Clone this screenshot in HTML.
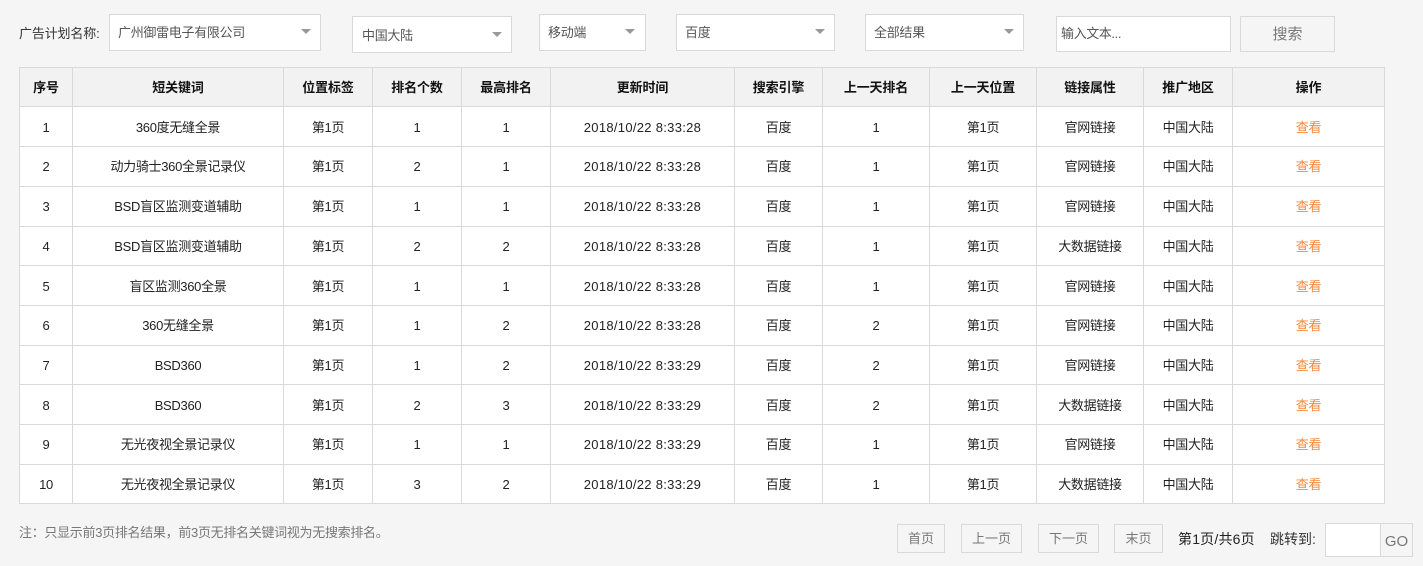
<!DOCTYPE html>
<html lang="zh-CN"><head><meta charset="utf-8"><title>排名</title>
<style>
*{box-sizing:border-box}
html,body{margin:0;padding:0;width:1423px;height:566px;overflow:hidden;background:#f5f5f5;font-family:"Liberation Sans","Noto Sans CJK SC",sans-serif;font-size:13px;color:#222}
.a{position:absolute;white-space:nowrap}
.box{position:absolute;background:#fff;border:1px solid #d9d9d9;color:#555;font-size:13px;white-space:nowrap;letter-spacing:-.3px}
.box i{position:absolute;width:0;height:0;border-left:5.5px solid transparent;border-right:5.5px solid transparent;border-top:5.5px solid #999;top:14px}
.btn{position:absolute;border:1px solid #d9d9d9;background:#f5f5f5;color:#777;text-align:center;white-space:nowrap}
table{position:absolute;left:19px;top:67px;border-collapse:collapse;table-layout:fixed;width:1365px;background:#fff;color:#222}
td,th{border:1px solid #d9d9d9;text-align:center;vertical-align:top;padding:11px 0 0;line-height:18px;font-size:13px;font-weight:400;white-space:nowrap;overflow:hidden;letter-spacing:-.3px}
th{background:#f2f2f2;color:#111;font-weight:700;letter-spacing:-.15px}
tr.o td{padding-top:12px}
td.d{letter-spacing:.3px}
.v{color:#f58a3c}
</style></head><body>
<div class="a" style="left:19px;top:25px;line-height:18px;color:#333;letter-spacing:-.15px">广告计划名称:</div>
<div class="box" style="left:109px;top:14px;width:212px;height:37px;line-height:35px;padding-left:8px">广州御雷电子有限公司<i style="left:191px"></i></div>
<div class="box" style="left:352px;top:16px;width:160px;height:37px;line-height:37px;padding-left:9px">中国大陆<i style="left:139px;top:15px"></i></div>
<div class="box" style="left:539px;top:14px;width:107px;height:37px;line-height:35px;padding-left:8px">移动端<i style="left:85px"></i></div>
<div class="box" style="left:676px;top:14px;width:159px;height:37px;line-height:35px;padding-left:8px">百度<i style="left:138px"></i></div>
<div class="box" style="left:865px;top:14px;width:159px;height:37px;line-height:35px;padding-left:8px">全部结果<i style="left:138px"></i></div>
<div class="box" style="left:1056px;top:16px;width:175px;height:36px;line-height:33px;padding-left:4px;letter-spacing:-.4px">输入文本...</div>
<div class="btn" style="left:1240px;top:16px;width:95px;height:36px;line-height:35px;font-size:15px">搜索</div>
<table>
<colgroup><col style="width:53px"><col style="width:211px"><col style="width:89px"><col style="width:89px"><col style="width:89px"><col style="width:184px"><col style="width:88px"><col style="width:107px"><col style="width:107px"><col style="width:107px"><col style="width:89px"><col style="width:152px"></colgroup>
<tr style="height:39px"><th>序号</th><th>短关键词</th><th>位置标签</th><th>排名个数</th><th>最高排名</th><th>更新时间</th><th>搜索引擎</th><th>上一天排名</th><th>上一天位置</th><th>链接属性</th><th>推广地区</th><th>操作</th></tr>
<tr class="o" style="height:40px"><td>1</td><td>360度无缝全景</td><td>第1页</td><td>1</td><td>1</td><td class="d">2018/10/22 8:33:28</td><td>百度</td><td>1</td><td>第1页</td><td>官网链接</td><td>中国大陆</td><td class="v">查看</td></tr>
<tr style="height:40px"><td>2</td><td>动力骑士360全景记录仪</td><td>第1页</td><td>2</td><td>1</td><td class="d">2018/10/22 8:33:28</td><td>百度</td><td>1</td><td>第1页</td><td>官网链接</td><td>中国大陆</td><td class="v">查看</td></tr>
<tr style="height:40px"><td>3</td><td>BSD盲区监测变道辅助</td><td>第1页</td><td>1</td><td>1</td><td class="d">2018/10/22 8:33:28</td><td>百度</td><td>1</td><td>第1页</td><td>官网链接</td><td>中国大陆</td><td class="v">查看</td></tr>
<tr style="height:39px"><td>4</td><td>BSD盲区监测变道辅助</td><td>第1页</td><td>2</td><td>2</td><td class="d">2018/10/22 8:33:28</td><td>百度</td><td>1</td><td>第1页</td><td>大数据链接</td><td>中国大陆</td><td class="v">查看</td></tr>
<tr class="o" style="height:40px"><td>5</td><td>盲区监测360全景</td><td>第1页</td><td>1</td><td>1</td><td class="d">2018/10/22 8:33:28</td><td>百度</td><td>1</td><td>第1页</td><td>官网链接</td><td>中国大陆</td><td class="v">查看</td></tr>
<tr style="height:40px"><td>6</td><td>360无缝全景</td><td>第1页</td><td>1</td><td>2</td><td class="d">2018/10/22 8:33:28</td><td>百度</td><td>2</td><td>第1页</td><td>官网链接</td><td>中国大陆</td><td class="v">查看</td></tr>
<tr style="height:39px"><td>7</td><td>BSD360</td><td>第1页</td><td>1</td><td>2</td><td class="d">2018/10/22 8:33:29</td><td>百度</td><td>2</td><td>第1页</td><td>官网链接</td><td>中国大陆</td><td class="v">查看</td></tr>
<tr class="o" style="height:40px"><td>8</td><td>BSD360</td><td>第1页</td><td>2</td><td>3</td><td class="d">2018/10/22 8:33:29</td><td>百度</td><td>2</td><td>第1页</td><td>大数据链接</td><td>中国大陆</td><td class="v">查看</td></tr>
<tr style="height:40px"><td>9</td><td>无光夜视全景记录仪</td><td>第1页</td><td>1</td><td>1</td><td class="d">2018/10/22 8:33:29</td><td>百度</td><td>1</td><td>第1页</td><td>官网链接</td><td>中国大陆</td><td class="v">查看</td></tr>
<tr style="height:39px"><td>10</td><td>无光夜视全景记录仪</td><td>第1页</td><td>3</td><td>2</td><td class="d">2018/10/22 8:33:29</td><td>百度</td><td>1</td><td>第1页</td><td>大数据链接</td><td>中国大陆</td><td class="v">查看</td></tr>
</table>
<div class="a" style="left:19px;top:524px;line-height:18px;color:#777;letter-spacing:-.3px">注&#xFF1A;只显示前3页排名结果&#xFF0C;前3页无排名关键词视为无搜索排名。</div>
<div class="btn" style="left:897px;top:524px;width:48px;height:29px;line-height:28px">首页</div>
<div class="btn" style="left:961px;top:524px;width:61px;height:29px;line-height:28px">上一页</div>
<div class="btn" style="left:1038px;top:524px;width:61px;height:29px;line-height:28px">下一页</div>
<div class="btn" style="left:1114px;top:524px;width:49px;height:29px;line-height:28px">末页</div>
<div class="a" style="left:1178px;top:530px;line-height:18px;color:#222;font-size:14px;letter-spacing:.2px">第1页/共6页</div>
<div class="a" style="left:1270px;top:530px;line-height:18px;color:#333;font-size:14px">跳转到:</div>
<div class="box" style="left:1325px;top:523px;width:56px;height:34px"></div>
<div class="btn" style="left:1380px;top:523px;width:33px;height:34px;line-height:35px;font-size:15px">GO</div>
</body></html>
